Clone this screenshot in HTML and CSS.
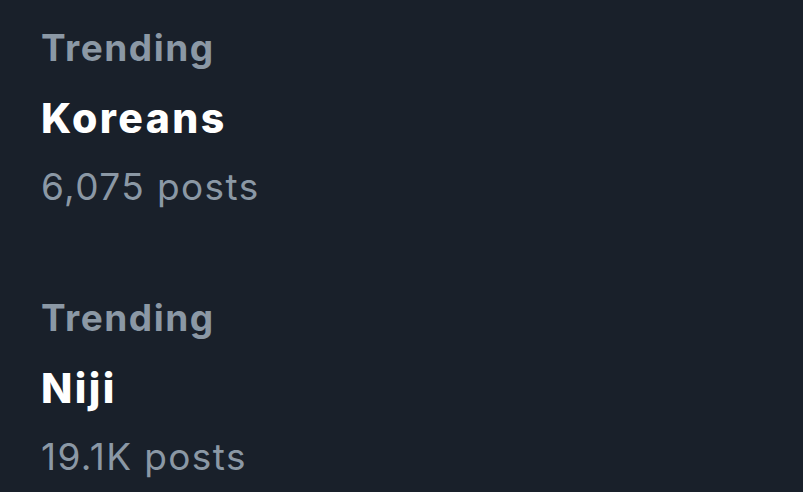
FILE: index.html
```html
<!DOCTYPE html>
<html>
<head>
<meta charset="utf-8">
<link rel="stylesheet" href="styles.css">
</head>
<body>
<div class="list">
  <div class="trend">
    <div class="label">Trending</div>
    <div class="title">Koreans</div>
    <div class="count">6,075 posts</div>
  </div>
  <div class="trend">
    <div class="label">Trending</div>
    <div class="title">Niji</div>
    <div class="count">19.1K posts</div>
  </div>
</div>
</body>
</html>
```
FILE: styles.css
```css
html, body {
  margin: 0;
  padding: 0;
  background: #19202a;
  width: 803px;
  height: 492px;
  overflow: hidden;
}
body {
  font-family: Inter, "Liberation Sans", sans-serif;
}
.list {
  display: flex;
  flex-direction: column;
  gap: 62px;
  padding: 13px 0 0 41px;
}
.trend {
  display: flex;
  flex-direction: column;
}
.label {
  color: #8b98a5;
  font-size: 37px;
  font-weight: 700;
  letter-spacing: 1.5px;
  line-height: 70px;
  height: 70px;
}
.title {
  color: #ffffff;
  font-size: 41px;
  font-weight: 800;
  letter-spacing: 2.4px;
  line-height: 70px;
  height: 70px;
}
.count {
  color: #8b98a5;
  font-size: 37px;
  font-weight: 400;
  letter-spacing: 1.4px;
  line-height: 68px;
  height: 68px;
}
```
